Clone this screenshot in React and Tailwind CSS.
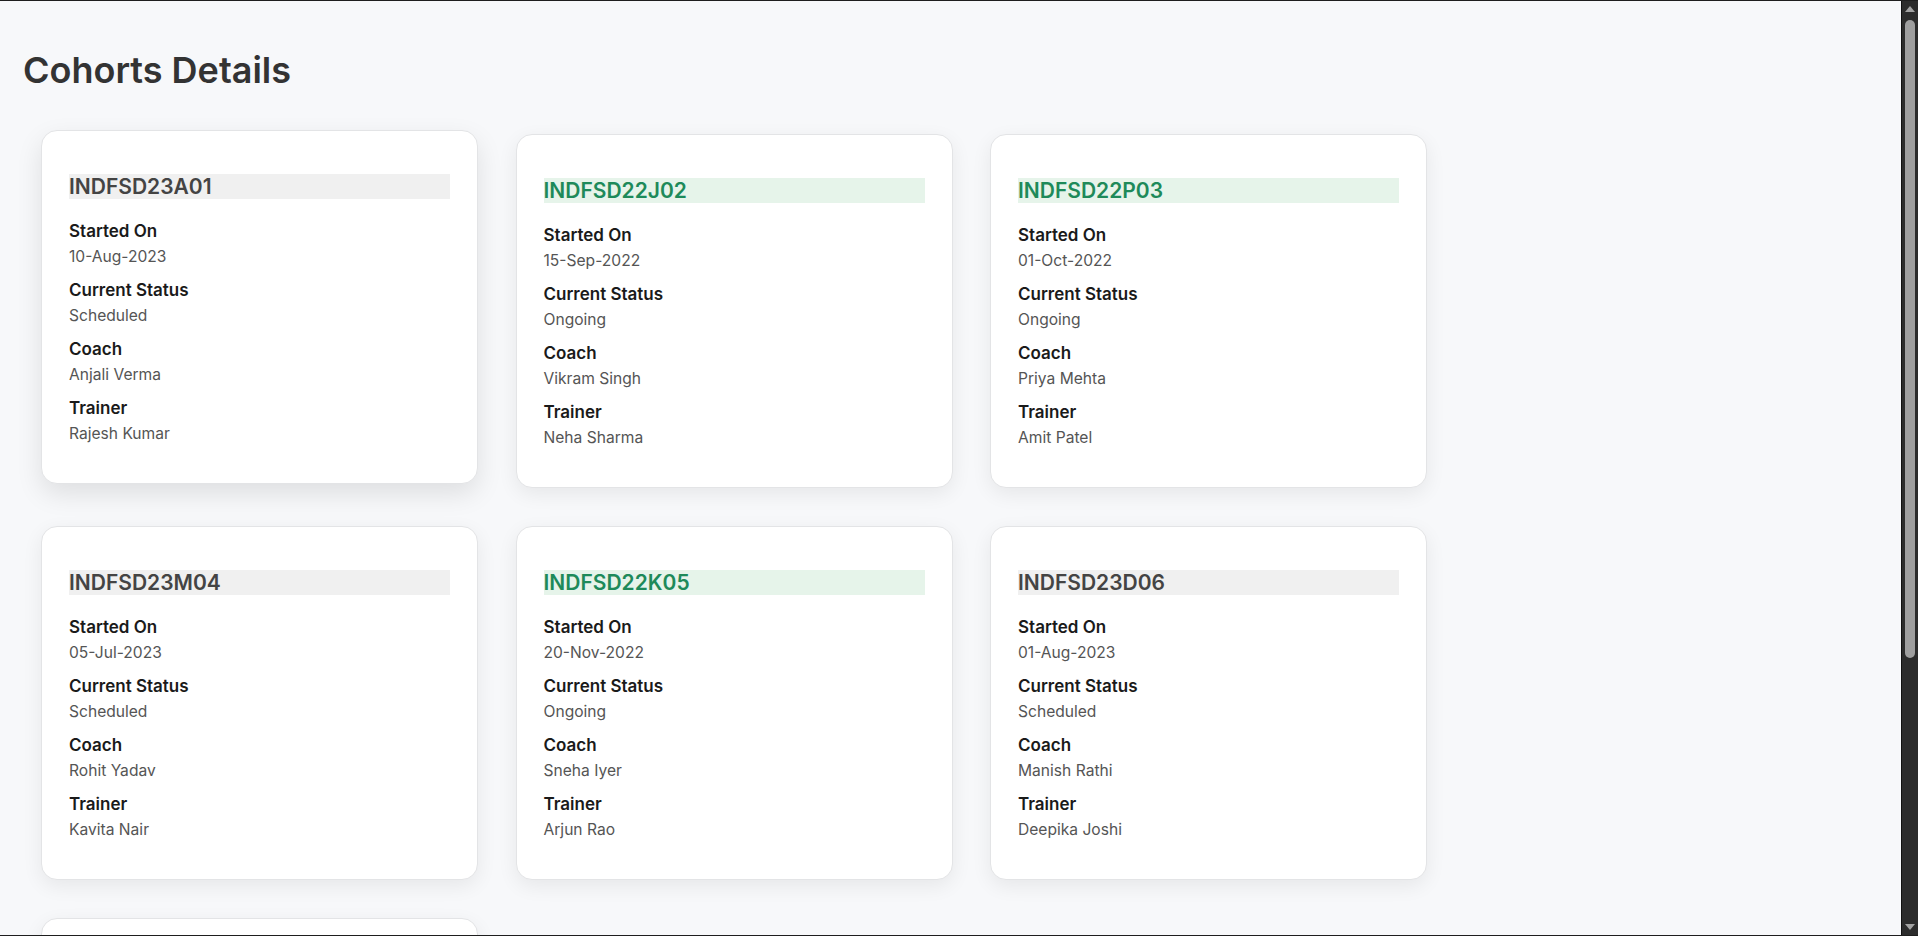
import React from "react";

const cohorts = [
  { id: "INDFSD23A01", started: "10-Aug-2023", status: "Scheduled", coach: "Anjali Verma", trainer: "Rajesh Kumar" },
  { id: "INDFSD22J02", started: "15-Sep-2022", status: "Ongoing", coach: "Vikram Singh", trainer: "Neha Sharma" },
  { id: "INDFSD22P03", started: "01-Oct-2022", status: "Ongoing", coach: "Priya Mehta", trainer: "Amit Patel" },
  { id: "INDFSD23M04", started: "05-Jul-2023", status: "Scheduled", coach: "Rohit Yadav", trainer: "Kavita Nair" },
  { id: "INDFSD22K05", started: "20-Nov-2022", status: "Ongoing", coach: "Sneha Iyer", trainer: "Arjun Rao" },
  { id: "INDFSD23D06", started: "01-Aug-2023", status: "Scheduled", coach: "Manish Rathi", trainer: "Deepika Joshi" },
  { id: "INDFSD23S07", started: "12-Sep-2023", status: "Scheduled", coach: "Kiran Desai", trainer: "Suresh Menon" },
];

function Field({ label, value, first }) {
  return (
    <div className={first ? "mt-[22px]" : "mt-[13px]"}>
      <div className="text-[17px] leading-[21px] font-semibold text-[#1a1a1a]">{label}</div>
      <div className="mt-[5px] text-[15.6px] leading-[20px] text-[#555555]">{value}</div>
    </div>
  );
}

function Card({ c, hovered }) {
  const ongoing = c.status === "Ongoing";
  return (
    <div
      className={
        "w-[437px] h-[354px] bg-white rounded-2xl border border-[#e3e4e6] px-[27px] pt-[43px] " +
        (hovered
          ? "-translate-y-1 shadow-[0_10px_26px_rgba(0,0,0,0.10)]"
          : "shadow-[0_6px_20px_rgba(0,0,0,0.07)]")
      }
    >
      {ongoing ? (
        <div className="h-[25px] leading-[25px] text-[21px] font-semibold bg-[#e6f4ea] text-[#1e8a5a]">{c.id}</div>
      ) : (
        <div className="h-[25px] leading-[25px] text-[21px] font-semibold bg-[#f0f0f0] text-[#444444]">{c.id}</div>
      )}
      <Field first label="Started On" value={c.started} />
      <Field label="Current Status" value={c.status} />
      <Field label="Coach" value={c.coach} />
      <Field label="Trainer" value={c.trainer} />
    </div>
  );
}

function Scrollbar() {
  return (
    <div className="w-[17px] shrink-0 bg-[#2c2c2c] border-l border-[#111111] flex flex-col items-center">
      <svg width="10" height="6" viewBox="0 0 10 6" className="mt-[5px] shrink-0">
        <path d="M0 6 L5 0 L10 6 Z" fill="#a3a3a3" />
      </svg>
      <div className="mt-[8px] h-[638px] w-[10px] rounded-full bg-[#9f9f9f]" />
      <div className="flex-1" />
      <svg width="10" height="6" viewBox="0 0 10 6" className="mb-[5px] shrink-0">
        <path d="M0 0 L10 0 L5 6 Z" fill="#a3a3a3" />
      </svg>
    </div>
  );
}

export default function App() {
  return (
    <div className="h-screen flex border-y border-[#1e1e1e] bg-[#f7f8fa] font-['Inter',sans-serif] overflow-hidden">
      <div className="flex-1 overflow-hidden">
        <div className="px-[23px] pt-[47px] pb-[40px]">
          <h1 className="text-[36px] leading-[44px] font-semibold text-[#333333]">Cohorts Details</h1>
          <div className="mt-[42px] pl-[18px] grid grid-cols-[repeat(3,437px)] gap-x-[37.5px] gap-y-[38px]">
            {cohorts.map((c, i) => (
              <Card key={c.id} c={c} hovered={i === 0} />
            ))}
          </div>
        </div>
      </div>
      <Scrollbar />
    </div>
  );
}
